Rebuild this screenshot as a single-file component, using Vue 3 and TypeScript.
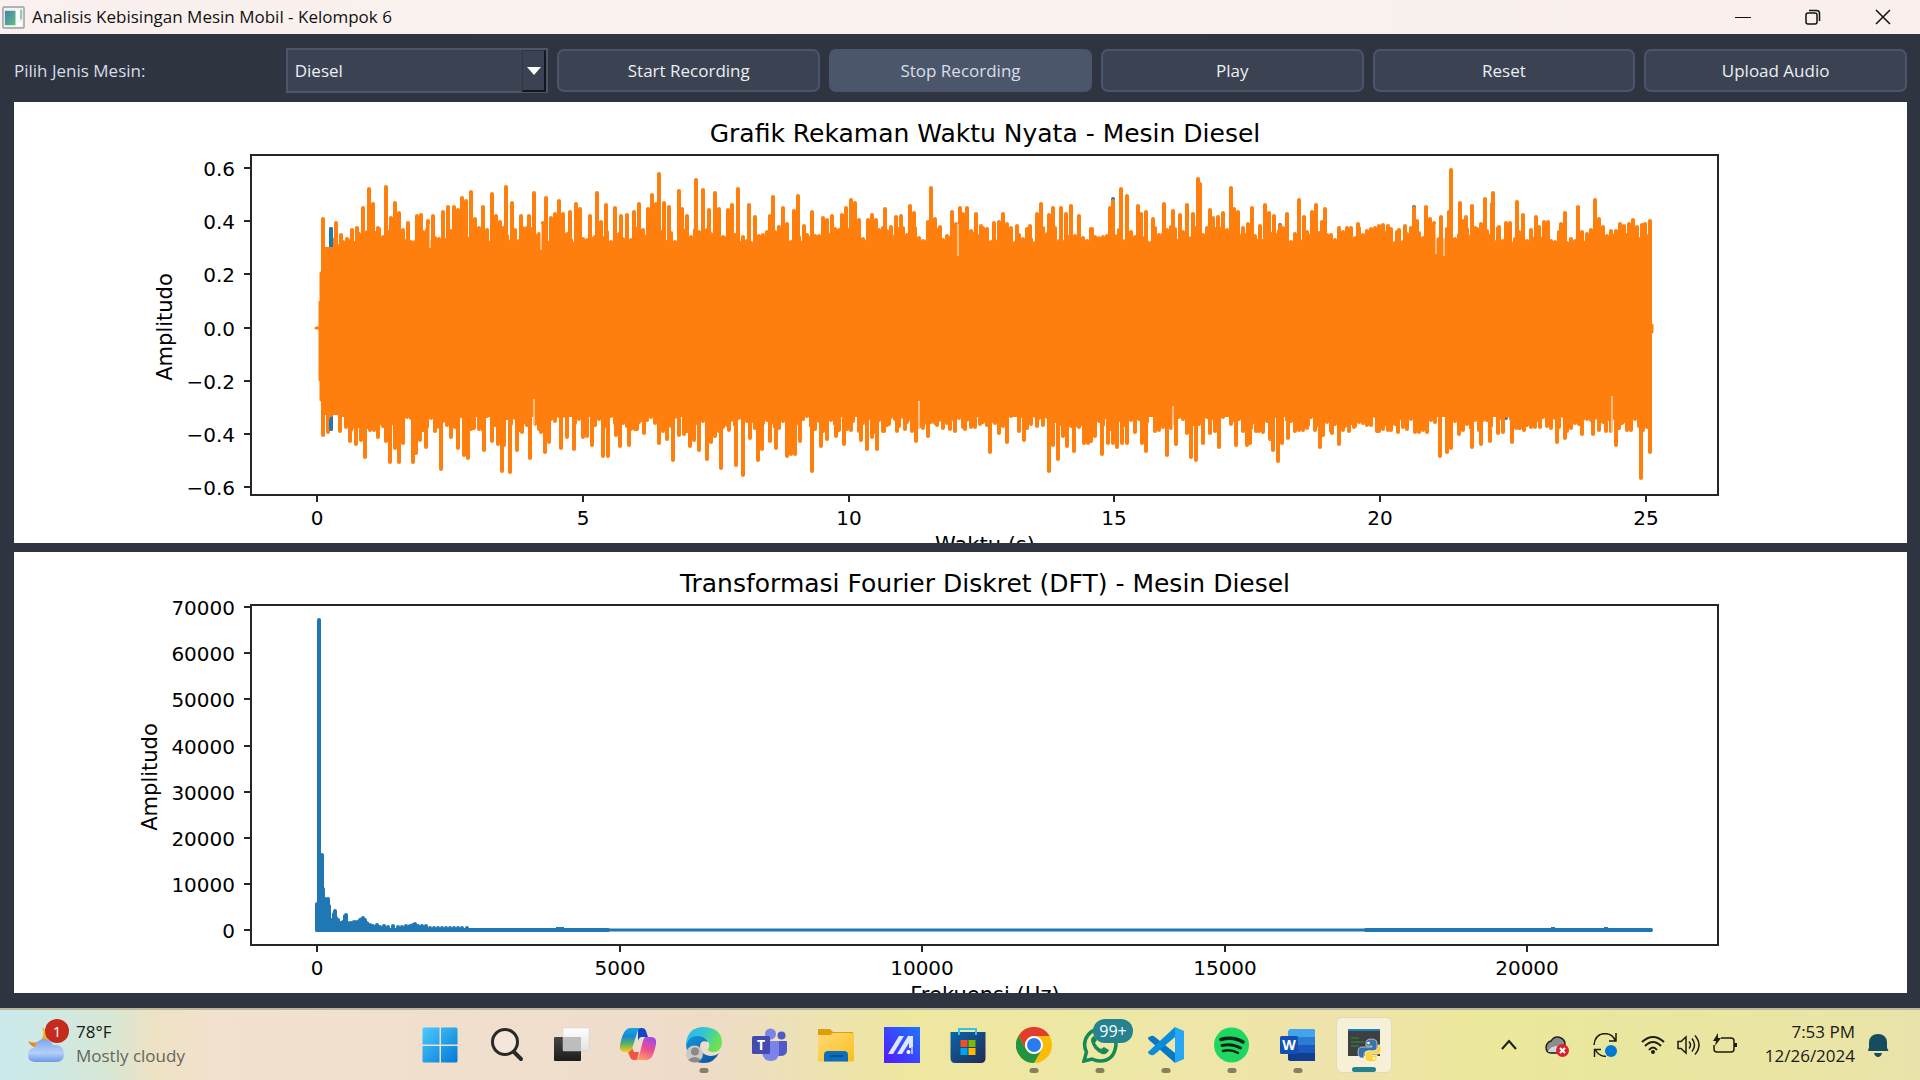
<script setup lang="ts">
import { ref } from 'vue'

type Point = [number, number]

const engines = ['Diesel', 'Bensin', 'Hybrid']
const engine = ref('Diesel')
const actions = ['Start Recording', 'Stop Recording', 'Play', 'Reset', 'Upload Audio']
const hovered = 'Stop Recording'

/* Peaks of the recorded signal, as x / y pairs on the chart canvas. */
const toPoints = (flat: string): Point[] =>
  flat.trim().split(/\s+/).map((pair) => pair.split(',').map(Number) as Point)

const upperPeaks = toPoints(`
323,219 336,223 341,235 352,230 357,228 363,208 369,189 373,204 378,228 386,187 391,218 395,203 399,213 408,223
417,216 421,215 428,221 433,216 443,212 448,207 454,207 458,210 462,198 466,201 471,192 475,219 483,207 492,194
496,216 500,222 506,187 512,203 521,216 529,216 534,193 543,223 546,198 551,218 555,214 559,201 563,214 570,212
576,204 580,209 590,216 597,193 601,222 606,205 615,208 621,216 627,215 634,212 639,204 648,209 652,195 656,204
659,174 664,203 669,207 679,191 682,209 687,216 696,180 703,190 709,210 715,193 719,209 728,210 732,205 738,189
749,205 755,217 770,216 773,197 783,208 787,224 794,211 798,196 804,226 812,212 823,218 827,220 832,216 842,215
846,208 851,200 855,203 859,220 868,220 872,215 876,220 885,209 896,217 901,216 910,206 914,213 928,222 931,188
935,219 940,227 952,212 956,224 960,208 963,214 967,208 976,214 981,226 994,223 999,222 1003,214 1007,224
1017,226 1030,226 1037,214 1041,204 1049,215 1053,208 1061,208 1066,214 1071,206 1079,216 1092,229 1110,208
1113,201 1121,189 1127,196 1138,206 1141,214 1146,212 1153,219 1164,204 1173,211 1180,215 1187,205 1193,214
1198,179 1200,184 1210,210 1213,218 1218,217 1223,213 1231,188 1234,209 1238,212 1248,224 1252,208 1260,226
1265,205 1269,213 1274,216 1280,226 1287,214 1299,200 1304,217 1312,212 1316,205 1322,222 1325,209 1339,228
1358,224 1367,231 1371,229 1375,228 1379,226 1383,225 1388,226 1397,232 1405,226 1414,208 1417,221 1426,207
1430,219 1434,223 1441,217 1449,212 1451,170 1460,203 1463,221 1466,217 1472,206 1477,229 1481,224 1485,199
1492,204 1493,193 1498,228 1506,223 1510,223 1517,202 1523,215 1531,230 1536,217 1544,222 1548,222 1561,224
1565,213 1578,207 1582,232 1591,230 1595,200 1599,219 1603,230 1611,231 1616,231 1620,224 1624,226 1629,224
1633,220 1637,227 1642,225 1645,224 1650,221`)

const lowerPeaks = toPoints(`
323,435 328,432 340,431 346,427 350,441 356,444 361,440 365,457 370,430 374,430 378,437 386,441 390,462 395,448
399,462 403,443 413,462 416,453 420,440 426,447 435,431 441,469 451,437 458,448 464,455 468,458 474,428 484,450
492,441 498,444 502,471 504,445 510,472 517,450 522,432 530,458 541,432 545,452 549,442 561,448 567,437 574,449
583,437 587,436 592,445 603,456 608,456 616,435 620,446 629,445 637,429 644,433 659,443 667,439 673,460 679,435
684,434 690,446 694,440 699,450 707,459 711,442 715,436 721,468 729,430 736,465 743,475 750,438 758,460 762,449
770,441 776,448 787,456 791,454 795,454 800,441 812,471 821,446 827,439 836,436 844,444 853,421 861,440 867,449
872,437 877,449 884,431 889,424 897,431 905,429 912,431 916,441 928,436 937,425 950,429 965,429 973,423 980,424
990,452 999,433 1007,442 1019,431 1024,440 1037,426 1049,471 1053,445 1058,459 1063,436 1067,446 1074,451
1084,443 1088,443 1091,441 1095,436 1102,454 1108,443 1113,443 1117,447 1122,443 1127,443 1135,432 1142,443
1146,451 1157,426 1167,455 1176,444 1187,433 1191,457 1196,460 1203,443 1210,433 1219,447 1236,445 1247,445
1250,443 1256,431 1270,439 1273,450 1278,461 1282,443 1288,438 1299,425 1308,425 1320,447 1323,435 1332,433
1339,444 1345,426 1349,431 1354,427 1369,421 1377,431 1388,430 1398,432 1405,415 1415,432 1427,432 1440,456
1447,452 1451,448 1459,434 1463,429 1472,447 1481,444 1490,441 1498,433 1512,442 1516,428 1520,428 1524,430
1531,427 1540,427 1548,416 1557,442 1565,438 1571,428 1577,420 1582,434 1593,434 1599,430 1606,431 1616,445
1622,423 1630,421 1641,478 1650,452`)

/* Small deterministic noise that fills the space between the peaks. */
const noise = (() => {
  let seed = 20241
  return () => {
    seed = (seed * 1103 + 12345) % 65536
    return seed / 65536
  }
})()

const spikes: string[] = []
for (const [x, y] of upperPeaks) spikes.push(`M${x} ${y}V320`)
for (const [x, y] of lowerPeaks) spikes.push(`M${x} ${y}V330`)
for (let x = 331; x < 1650; x += 4) {
  const calm = x < 345 ? 8 : 0
  spikes.push(`M${x} ${Math.round(227 + calm + noise() * 16)}V${Math.round(415 + noise() * 17 - calm)}`)
}
const waveform = spikes.join('')

const slits = toPoints('430,248 541,250 958,256 1436,254 1444,256')
const lowSlits = toPoints('534,399 919,401 1173,406 1612,396')

const spectrum = toPoints(`
317,904 319,620 322,855 323,889 325,899 328,899 329,906 331,920 334,914 335,911 336,918 338,920 341,923 343,922
345,916 346,915 348,923 351,923 354,922 357,922 360,920 362,919 363,918 365,920 367,923 370,925 373,926 377,925
380,927 384,926 388,927 393,926 398,927 402,927 406,926 410,926 413,925 415,924 418,926 422,926 426,926 430,928
434,928 438,928 442,928 446,928 450,928 454,928 458,928 462,928 467,928`).map(([x, y]) => `M${x} ${y}V930`).join('')

const charts = [
  {
    id: 'time',
    origin: 102,
    title: 'Grafik Rekaman Waktu Nyata - Mesin Diesel',
    xLabel: 'Waktu (s)',
    labelX: 172,
    xTicks: [[317, '0'], [583, '5'], [849, '10'], [1114, '15'], [1380, '20'], [1646, '25']] as [number, string][],
    yTicks: [[168, '0.6'], [221, '0.4'], [274, '0.2'], [328, '0.0'], [381, '−0.2'], [434, '−0.4'], [487, '−0.6']] as [number, string][],
  },
  {
    id: 'dft',
    origin: 552,
    title: 'Transformasi Fourier Diskret (DFT) - Mesin Diesel',
    xLabel: 'Frekuensi (Hz)',
    labelX: 157,
    xTicks: [[317, '0'], [620, '5000'], [922, '10000'], [1225, '15000'], [1527, '20000']] as [number, string][],
    yTicks: [[607, '70000'], [653, '60000'], [699, '50000'], [746, '40000'], [792, '30000'], [838, '20000'], [884, '10000'], [930, '0']] as [number, string][],
  },
]

interface TaskApp { id: string; name: string; state: '' | 'open' | 'active' }
const apps: TaskApp[] = [
  { id: 'start', name: 'Start', state: '' },
  { id: 'search', name: 'Search', state: '' },
  { id: 'tasks', name: 'Task View', state: '' },
  { id: 'copilot', name: 'Copilot', state: '' },
  { id: 'edge', name: 'Edge', state: 'open' },
  { id: 'teams', name: 'Teams', state: '' },
  { id: 'files', name: 'File Explorer', state: '' },
  { id: 'asus', name: 'MyASUS', state: '' },
  { id: 'store', name: 'Microsoft Store', state: '' },
  { id: 'chrome', name: 'Chrome', state: 'open' },
  { id: 'whatsapp', name: 'WhatsApp', state: 'open' },
  { id: 'code', name: 'Visual Studio Code', state: 'open' },
  { id: 'spotify', name: 'Spotify', state: 'open' },
  { id: 'word', name: 'Word', state: 'open' },
  { id: 'python', name: 'Python', state: 'active' },
]
</script>

<template>
  <div class="desktop">
    <header class="titlebar">
      <svg class="app-icon" viewBox="0 0 24 24" aria-hidden="true">
        <defs>
          <linearGradient id="appPane" x1="0" y1="0" x2="1" y2="1">
            <stop offset="0" stop-color="#4b7fb4" /><stop offset="1" stop-color="#5fbf7c" />
          </linearGradient>
        </defs>
        <rect x="1" y="1" width="22" height="22" rx="1" fill="#f1f2f2" stroke="#9a9fa3" stroke-width="1.5" />
        <rect x="3" y="5" width="11" height="15" fill="url(#appPane)" />
        <rect x="15" y="4" width="3" height="11" fill="#fff" /><rect x="19" y="4" width="2" height="10" fill="#8fc4a8" />
        <rect x="15" y="17" width="6" height="4" fill="#fff" />
      </svg>
      <h1 class="window-title">Analisis Kebisingan Mesin Mobil - Kelompok 6</h1>
      <div class="window-buttons">
        <button type="button" aria-label="Minimize"><svg viewBox="0 0 16 16"><path d="M0 8.500H16" /></svg></button>
        <button type="button" aria-label="Restore">
          <svg viewBox="0 0 16 16"><rect x="1" y="4" width="11" height="11" rx="2" stroke-width="1.500" /><path d="M4 1.500H11.500Q14.500 1.500 14.500 4.500V12" stroke-width="1.500" /></svg>
        </button>
        <button type="button" aria-label="Close"><svg viewBox="0 0 16 16"><path d="M1 1L15 15M15 1L1 15" stroke-width="1.500" /></svg></button>
      </div>
    </header>

    <main class="app">
      <div class="toolbar">
        <label for="engine">Pilih Jenis Mesin:</label>
        <div class="picker">
          <select id="engine" v-model="engine">
            <option v-for="name in engines" :key="name">{{ name }}</option>
          </select>
          <span class="picker-arrow" aria-hidden="true"><svg viewBox="0 0 14 8"><path d="M0 0H14L7 8Z" fill="#fff" /></svg></span>
        </div>
        <button v-for="action in actions" :key="action" type="button" :class="{ hovered: action === hovered }">{{ action }}</button>
      </div>

      <section v-for="chart in charts" :key="chart.id" class="panel">
        <svg class="chart" :viewBox="`14 ${chart.origin} 1893 441`" role="img" :aria-label="chart.title">
          <g v-if="chart.id === 'time'">
            <path d="M331 229V429M1113 199V220M1280 225V240M1506 400V418M1414 207V220" stroke="#1f77b4" class="trace" />
            <rect x="322" y="247" width="330" height="168" fill="#ff7f0e" />
            <rect x="340" y="245" width="1312" height="172" fill="#ff7f0e" />
            <path :d="waveform" stroke="#ff7f0e" class="trace" />
            <path d="M316 328H320M320 302V380M321 273V400M652 300V340M1652 325V332" stroke="#ff7f0e" class="trace thin" />
            <path d="M331 229V238M331 420V429" stroke="#1f77b4" class="trace" />
            <path v-for="[x, y] in slits" :key="`u${x}`" :d="`M${x} 224V${y}`" class="slit" />
            <path v-for="[x, y] in lowSlits" :key="`l${x}`" :d="`M${x} ${y}V434`" class="slit" />
          </g>
          <g v-else>
            <path d="M317 930H1652" stroke="#1f77b4" stroke-width="3" />
            <path d="M317 930H608M1366 930H1651" stroke="#1f77b4" class="trace" />
            <path :d="spectrum" stroke="#1f77b4" class="trace" />
            <path d="M1551 928H1555M1604 928H1608M556 928H564" stroke="#1f77b4" stroke-width="2" />
          </g>
          <rect x="251" :y="chart.origin + 53" width="1467" height="340" class="frame" />
          <text x="985" :y="chart.origin + 40" class="title">{{ chart.title }}</text>
          <g v-for="[x, label] in chart.xTicks" :key="label">
            <path :d="`M${x} ${chart.origin + 393}v7`" class="frame" />
            <text :x="x" :y="chart.origin + 423" class="tick">{{ label }}</text>
          </g>
          <g v-for="[y, label] in chart.yTicks" :key="label">
            <path :d="`M251 ${y}h-7`" class="frame" />
            <text x="235" :y="y + 8" class="tick end">{{ label }}</text>
          </g>
          <text :transform="`translate(${chart.labelX} ${chart.origin + 225}) rotate(-90)`" class="axis-name">Amplitudo</text>
          <text x="985" :y="chart.origin + 450" class="axis-name">{{ chart.xLabel }}</text>
        </svg>
      </section>
    </main>

    <footer class="taskbar">
      <button type="button" class="weather">
        <span class="weather-icon">
          <svg viewBox="0 0 36 36" aria-hidden="true">
            <defs>
              <linearGradient id="moon" x1="0" y1="1" x2="1" y2="0"><stop offset="0" stop-color="#e9791c" /><stop offset="1" stop-color="#f7c32e" /></linearGradient>
              <linearGradient id="cloud" x1="0" y1="0" x2="0" y2="1"><stop offset="0" stop-color="#7ea4ec" /><stop offset=".6" stop-color="#b4d0fa" /><stop offset="1" stop-color="#6f97e4" /></linearGradient>
            </defs>
            <path d="M14 0Q18 11 11 14Q6 17 0 14Q4 22 12 21Q20 19 20 10Q19 3 14 0Z" fill="url(#moon)" />
            <path d="M7 35Q0 35 0 28Q0 22 6 21Q9 12 17 12Q22 12 25 18Q36 17 36 27Q36 35 28 35Z" fill="url(#cloud)" />
          </svg>
          <span class="badge">1</span>
        </span>
        <span class="weather-text"><span>78°F</span><span class="muted">Mostly cloudy</span></span>
      </button>

      <nav class="apps" aria-label="Taskbar">
        <button v-for="app in apps" :key="app.id" type="button" :class="['app-button', app.state]" :aria-label="app.name">
          <svg v-if="app.id === 'start'" viewBox="0 0 36 36">
            <defs><linearGradient id="win" x1="0" y1="0" x2="1" y2="1"><stop offset="0" stop-color="#4ccbff" /><stop offset="1" stop-color="#0378d4" /></linearGradient></defs>
            <path d="M2 .500H17.500V17.500H.500V2Q.500 .500 2 .500ZM19 .500H34Q35.500 .500 35.500 2V17.500H19ZM.500 19H17.500V35.500H2Q.500 35.500 .500 34ZM19 19H35.500V34Q35.500 35.500 34 35.500H19Z" fill="url(#win)" />
          </svg>
          <svg v-else-if="app.id === 'search'" viewBox="0 0 36 36" fill="none" stroke="#292929">
            <circle cx="17" cy="15" r="12.500" fill="#f5e6da" stroke-width="3" /><path d="M26 25L33 32" stroke-width="4" stroke-linecap="round" />
          </svg>
          <svg v-else-if="app.id === 'tasks'" viewBox="0 0 36 36">
            <defs>
              <linearGradient id="tv" x1="0" y1="0" x2="0" y2="1"><stop stop-color="#454545" /><stop offset="1" stop-color="#1c1c1c" /></linearGradient>
              <linearGradient id="tvTop" x1="0" y1="0" x2="0" y2="1"><stop stop-color="#ffffff" /><stop offset="1" stop-color="#e2e2e2" /></linearGradient>
            </defs>
            <rect x="0" y="10" width="27" height="24" rx="1" fill="url(#tv)" /><rect x="9" y="1" width="26" height="23" rx="1" fill="url(#tvTop)" stroke="#d2ccc6" stroke-width=".5" /><rect x="9" y="10" width="18" height="14" fill="#bdbdbd" />
          </svg>
          <svg v-else-if="app.id === 'copilot'" viewBox="0 0 36 36">
            <defs>
              <linearGradient id="cpA" x1="0" y1="0" x2="0" y2="1"><stop offset="0" stop-color="#16a5e9" /><stop offset=".35" stop-color="#1787d2" /><stop offset=".65" stop-color="#56b163" /><stop offset="1" stop-color="#fecb19" /></linearGradient>
              <linearGradient id="cpB" x1=".6" y1="0" x2=".2" y2="1"><stop offset="0" stop-color="#a04be8" /><stop offset=".45" stop-color="#ec4b93" /><stop offset="1" stop-color="#ffa35e" /></linearGradient>
            </defs>
            <path d="M18 1H22Q25 1 26 4L28 10H22Q19 10 18 14Z" fill="#1546c5" />
            <path d="M10 1H21Q18 2 17 6L12 22Q11 25 8 25H5Q-1 25 0 18Q2 8 5 4Q7 1 10 1Z" fill="url(#cpA)" />
            <path d="M8 25Q11 25 12 21L14 25H19L17 33H14Q11 33 10 30Z" fill="#f2553d" />
            <path d="M26 10H31Q37 10 36 17Q34 27 31 31Q29 33 26 33H15Q18 33 19 29L23 14Q24 10 26 10Z" fill="url(#cpB)" />
          </svg>
          <svg v-else-if="app.id === 'edge'" viewBox="0 0 36 36">
            <defs>
              <linearGradient id="egA" x1="0" y1="0" x2="1" y2=".4"><stop offset="0" stop-color="#2bb6e6" /><stop offset=".5" stop-color="#30c6d4" /><stop offset="1" stop-color="#6ce34e" /></linearGradient>
              <linearGradient id="egB" x1="0" y1="0" x2="1" y2="1"><stop offset="0" stop-color="#1596df" /><stop offset="1" stop-color="#0b4d9b" /></linearGradient>
            </defs>
            <path d="M0 18Q1 0 18 0Q36 1 36 16Q35 25 27 25Q22 25 22 22Q24 20 23 16Q21 12 17 11Q8 8 0 18Z" fill="url(#egA)" />
            <path d="M0 18Q3 9 11 9Q19 9 22 15Q14 12 14 20Q15 28 24 29Q30 29 33 26Q28 36 18 36Q2 36 0 18Z" fill="url(#egB)" />
            <circle cx="8.500" cy="27" r="8.500" fill="#c9c9c7" /><circle cx="9" cy="24.500" r="4" fill="#8d8986" /><path d="M2 33Q9 27 15 33Q9 38 2 33Z" fill="#8d8986" />
          </svg>
          <svg v-else-if="app.id === 'teams'" viewBox="0 0 36 36">
            <circle cx="18.500" cy="7" r="5.500" fill="#7b83eb" /><circle cx="29.500" cy="8.500" r="4" fill="#5059c9" />
            <path d="M26 14H34Q35 14 35 15V23Q35 29 28 29Q26 29 25 28Z" fill="#5059c9" />
            <path d="M10 14H26Q27 14 27 15V25Q27 34 18.500 34Q11 34 10 25Z" fill="#7b83eb" />
            <rect x="0" y="9" width="18" height="18" rx="1.500" fill="#444bb0" />
            <text x="9" y="23" font-size="14" font-weight="700" fill="#fff" text-anchor="middle">T</text>
          </svg>
          <svg v-else-if="app.id === 'files'" viewBox="0 0 36 36">
            <defs><linearGradient id="fold" x1="0" y1="0" x2="1" y2="1"><stop stop-color="#ffd976" /><stop offset="1" stop-color="#fbbf1d" /></linearGradient></defs>
            <path d="M0 2H12L15 5H35V12H0Z" fill="#dc9e0b" /><path d="M0 8H12L15 6H36V33Q36 34.500 34.500 34.500H1.500Q0 34.500 0 33Z" fill="url(#fold)" />
            <path d="M6 34.500V28Q6 24 10 24H26Q30 24 30 28V34.500Z" fill="#0b6fc0" /><rect x="11" y="28" width="14" height="2" fill="#0a4e8e" />
          </svg>
          <svg v-else-if="app.id === 'asus'" viewBox="0 0 36 36">
            <defs><linearGradient id="asus" x1="0" y1="1" x2="1" y2="0"><stop stop-color="#5418ff" /><stop offset="1" stop-color="#1c76ff" /></linearGradient></defs>
            <rect width="36" height="36" fill="url(#asus)" /><path d="M4 27L15 9H20L9 27ZM13 27L24 9H29V21H25V16L18 27Z" fill="#dfe6ff" /><circle cx="24.500" cy="25" r="2" fill="#fff" /><path d="M27 20H29V27H27Z" fill="#aab7ff" />
          </svg>
          <svg v-else-if="app.id === 'store'" viewBox="0 0 36 36">
            <defs><linearGradient id="bag" x1="0" y1="0" x2="1" y2="1"><stop stop-color="#0a66ad" /><stop offset="1" stop-color="#222a52" /></linearGradient></defs>
            <path d="M9 8V2H26V8" fill="none" stroke="#35c1e8" stroke-width="2" /><path d="M.500 5H35.500V31Q35.500 36 31 36H5Q.500 36 .500 31Z" fill="url(#bag)" /><path d="M9 8V4.500M26 8V4.500" stroke="#35c1e8" stroke-width="2" />
            <path d="M10.500 13H17.500V20H10.500Z" fill="#f25022" /><path d="M18.500 13H25.500V20H18.500Z" fill="#7fba00" /><path d="M10.500 21H17.500V28H10.500Z" fill="#00a4ef" /><path d="M18.500 21H25.500V28H18.500Z" fill="#ffb900" />
          </svg>
          <svg v-else-if="app.id === 'chrome'" viewBox="0 0 36 36">
            <circle cx="18" cy="18" r="18" fill="#fbbc09" />
            <path d="M2.400 9A18 18 0 0 1 33.600 9H18A9 9 0 0 0 10.200 22.500Z" fill="#e33b2e" /><path d="M2.400 9L10.200 22.500A9 9 0 0 0 25.800 22.500L18 36A18 18 0 0 1 2.400 9Z" fill="#229342" />
            <circle cx="18" cy="18" r="9" fill="#fff" /><circle cx="18" cy="18" r="7" fill="#2a7bee" />
          </svg>
          <svg v-else-if="app.id === 'whatsapp'" viewBox="0 0 36 36">
            <path d="M2 34L4.500 25Q0 16 6 8Q12 1 20 2Q34 4 34 18Q32 34 18 34Q14 34 10 32Z" fill="none" stroke="#158a54" stroke-width="3.500" />
            <path d="M12 9Q9 10 9 14Q11 23 20 27Q25 28 27 23L22 20L19 22Q15 20 13 16L15 13Z" fill="#158a54" />
          </svg>
          <svg v-else-if="app.id === 'code'" viewBox="0 0 36 36">
            <path d="M27 0L36 4V32L27 36Z" fill="#28a5f4" /><path d="M27 36L1 13Q-1 11 1 10L3 9Q5 8 7 10L27 26Z" fill="#0878c5" /><path d="M27 0L1 24Q-1 25 1 27L3 28Q5 29 7 27L27 10Z" fill="#0b8ddb" />
          </svg>
          <svg v-else-if="app.id === 'spotify'" viewBox="0 0 36 36" fill="none" stroke="#10251a" stroke-linecap="round">
            <circle cx="17.500" cy="18" r="17.500" fill="#1ed760" stroke="none" /><path d="M7 12.500Q19 9 29 15" stroke-width="3.500" /><path d="M8 18.500Q18 16 26.500 21" stroke-width="3" /><path d="M9 24Q17 22 24 26" stroke-width="2.500" />
          </svg>
          <svg v-else-if="app.id === 'word'" viewBox="0 0 36 36">
            <path d="M10 2H34L35 3V10H8V4Z" fill="#41a5ee" /><path d="M8 10H35V18H8Z" fill="#2b7cd3" /><path d="M8 18H35V26H8Z" fill="#185abd" /><path d="M8 26H35V34H10L8 33Z" fill="#103f91" /><rect x="0" y="9" width="18" height="18" rx="1.500" fill="#1450b3" />
            <text x="9" y="23" font-size="14" font-weight="700" fill="#fff" text-anchor="middle">W</text>
          </svg>
          <svg v-else viewBox="0 0 36 36">
            <rect x="2" y="2" width="32" height="27" fill="#3e3f41" /><rect x="2" y="2" width="32" height="2" fill="#1682c9" /><path d="M5 11H13M5 15H18M5 19H13" stroke="#2c9135" stroke-width="1" />
            <path d="M25 12Q20 12 20 16V19H26V20H16Q12 20 12 25Q12 31 16 31H18V27Q18 24 22 24H28Q31 24 31 20V16Q31 12 25 12Z" fill="#3973a5" stroke="#dfe9ef" stroke-width=".7" />
            <path d="M26 35Q31 35 31 31V28H25V27H32Q35 27 35 24Q36 17 32 18V20Q32 24 28 24H22Q19 24 19 28V31Q19 35 26 35Z" fill="#ffd43b" stroke="#fff" stroke-width=".7" /><circle cx="22.500" cy="16" r="1.300" fill="#fff" /><circle cx="28" cy="31.500" r="1.300" fill="#fff" />
          </svg>
          <span v-if="app.id === 'whatsapp'" class="count">99+</span>
          <span v-if="app.state" class="running"></span>
        </button>
      </nav>

      <div class="tray">
        <button type="button" class="tray-button wide" aria-label="Show hidden icons"><svg viewBox="0 0 24 24" class="line"><path d="M5 16L12 8L19 16" stroke-width="2" /></svg></button>
        <button type="button" class="tray-button wide" aria-label="OneDrive">
          <svg viewBox="0 0 24 24"><path d="M6 20Q1 20 1 14Q2 9 6 8Q10 2 16 5Q20 7 20 11L14 20Z" fill="#8d8d8d" stroke="#222" stroke-width="1.500" /><path d="M3 19Q5 13 12 13L13 19Z" fill="#d7d7d7" /><circle cx="17.500" cy="17.500" r="6.500" fill="#d9232e" /><path d="M15 15L20 20M20 15L15 20" stroke="#fff" stroke-width="2" /></svg>
        </button>
        <button type="button" class="tray-button wide" aria-label="Updates">
          <svg viewBox="0 0 24 24" class="line"><path d="M1 12Q2 1 12 0.500Q20 1 22.500 8M23 0V8H16M13 23.500Q5 23 2 16M1.500 24V16.500H8" stroke-width="1.500" /><circle cx="18" cy="18" r="6" fill="#0078d4" stroke="none" /></svg>
        </button>
        <button type="button" class="tray-group" aria-label="Network, sound and battery">
          <svg viewBox="0 0 24 24" class="line"><path d="M1 9Q12 -1 23 9M4 13Q12 5 20 13M8 17Q12 12 16 17" stroke-width="2" /><circle cx="12" cy="19" r="2" fill="#1d1d12" stroke="none" /></svg>
          <svg viewBox="0 0 24 24" class="line"><path d="M1 8.500H4L9 4V20L4 15.500H1ZM12 8.500Q15 12 12 15.500M15 5.500Q20 12 15 18.500M18 2.500Q26 12 18 21.500" stroke-width="1.500" /></svg>
          <svg viewBox="0 0 24 24" class="line"><path d="M8 5H18Q21 5 21 8V16Q21 19 18 19H4Q1 19 1 16V12" stroke-width="1.500" /><path d="M21 10H24V14H21Z M5 0L0 8H3L2 13L8 5H5Z" fill="#1d1d12" stroke="none" /></svg>
        </button>
        <button type="button" class="clock"><span>7:53 PM</span><span>12/26/2024</span></button>
        <button type="button" class="tray-button" aria-label="Notifications">
          <svg viewBox="0 0 24 24"><path d="M3 18Q1 18 3 15V9Q4 1 12 1Q20 1 21 9V15Q23 18 22 18Z" fill="#154c5e" /><path d="M8 20H16Q15 24 12 24Q9 24 8 20Z" fill="#154c5e" /></svg>
        </button>
      </div>
    </footer>
  </div>
</template>

<style>
body {
  margin: 0;
}
</style>

<style scoped>
.desktop {
  display: flex;
  flex-direction: column;
  min-height: 100vh;
  font-family: "Open Sans", "Noto Sans", sans-serif;
  font-size: 17px;
  background: #2e3440;
}
button {
  font: inherit;
  padding: 0;
  border: 0;
  background: none;
  color: inherit;
}
.titlebar {
  display: flex;
  align-items: center;
  height: 34px;
  padding-left: 2px;
  background: linear-gradient(90deg, #f9f0ef, #faf2ee 40%, #f9f0ee);
  color: #111;
}
.app-icon {
  width: 23px;
  height: 23px;
  margin-right: 7px;
}
.window-title {
  flex: 1;
  margin: 0;
  font-size: 17px;
  font-weight: 400;
  line-height: 34px;
}
.window-buttons {
  display: flex;
  padding-right: 2px;
}
.window-buttons button {
  display: flex;
  align-items: center;
  justify-content: center;
  width: 70px;
  height: 34px;
}
.window-buttons svg {
  width: 16px;
  height: 16px;
  fill: none;
  stroke: #111;
  stroke-width: 1;
}
.app {
  display: flex;
  flex: 1;
  flex-direction: column;
  gap: 9px;
  padding: 14px 13px 15px 14px;
  background: #2e3440;
}
.toolbar {
  display: grid;
  grid-template-columns: repeat(7, minmax(0, 1fr));
  align-items: center;
  gap: 9px;
  height: 45px;
  color: #eceff4;
}
.toolbar label {
  color: #d8dee9;
}
.toolbar > button {
  height: 43px;
  border: 2px solid #4a546a;
  border-radius: 7px;
  background: #3b4252;
}
.toolbar > button.hovered {
  background: #4c566a;
  color: #d8dee9;
}
.picker {
  position: relative;
  height: 45px;
}
.picker select {
  box-sizing: border-box;
  width: 100%;
  height: 100%;
  padding: 0 30px 0 7px;
  border: 2px solid #4c566a;
  border-radius: 0;
  appearance: none;
  background: #3b4252;
  color: #eceff4;
  font: inherit;
}
.picker-arrow {
  position: absolute;
  top: 2px;
  right: 2px;
  bottom: 1px;
  display: flex;
  align-items: center;
  justify-content: center;
  width: 21px;
  border: 1px solid #2f3543;
  border-right: 2px solid #14171d;
  border-bottom: 2px solid #14171d;
  pointer-events: none;
}
.picker-arrow svg {
  width: 14px;
  height: 8px;
}
.panel {
  flex: 1;
  overflow: hidden;
  background: #fff;
}
.chart {
  display: block;
  width: 100%;
  height: 100%;
  font-family: "DejaVu Sans", sans-serif;
}
.trace {
  fill: none;
  stroke-width: 4;
  stroke-linecap: round;
}
.trace.thin {
  stroke-width: 3;
}
.slit {
  stroke: #fff;
  stroke-width: 1;
}
.frame {
  fill: none;
  stroke: #262626;
  stroke-width: 2;
}
.title {
  font-size: 25px;
  text-anchor: middle;
}
.axis-name {
  font-size: 21px;
  text-anchor: middle;
}
.tick {
  font-size: 20px;
  text-anchor: middle;
}
.tick.end {
  text-anchor: end;
}
.taskbar {
  display: flex;
  align-items: center;
  height: 70px;
  border-top: 2px solid #bab79b;
  background: linear-gradient(90deg, #cbeaec 0%, #cfe9e3 3%, #d9e6d2 6%, #eee2c4 8%, #f2e1ce 11%, #f0decd 30%, #eedcc8 37%, #ece2b4 42%, #eee7a0 47%, #eee8a6 58%, #efe3ac 70%, #ece89b 77%, #e9e79f 84%, #ebe5a3 92%, #e9e3ab 100%);
  color: #1a1a14;
}
.weather {
  display: flex;
  align-items: center;
  gap: 12px;
  width: 412px;
  padding-left: 28px;
  text-align: left;
}
.weather-icon {
  position: relative;
  width: 36px;
  height: 36px;
}
.weather-icon svg {
  width: 36px;
  height: 36px;
}
.badge {
  position: absolute;
  top: -8px;
  right: -5px;
  width: 24px;
  border-radius: 50%;
  background: #c42b1c;
  color: #fff;
  font-size: 15px;
  line-height: 24px;
  text-align: center;
}
.weather-text,
.clock {
  display: flex;
  flex-direction: column;
  padding-bottom: 2px;
  line-height: 24px;
}
.muted {
  color: #66665b;
}
.apps {
  display: flex;
  gap: 10px;
}
.app-button {
  position: relative;
  display: flex;
  align-items: center;
  justify-content: center;
  box-sizing: border-box;
  width: 56px;
  height: 56px;
  border-radius: 6px;
}
.app-button svg {
  width: 36px;
  height: 36px;
}
.app-button.active {
  border: 1px solid #e0dcb4;
  background: #f6f1d6;
}
.running {
  position: absolute;
  bottom: 0;
  left: 50%;
  width: 9px;
  height: 5px;
  border-radius: 3px;
  background: #868063;
  transform: translateX(-50%);
}
.active .running {
  width: 24px;
  background: #25828f;
}
.count {
  position: absolute;
  top: 2px;
  left: 21px;
  width: 40px;
  border-radius: 12px;
  background: #25828f;
  color: #fff;
  font-size: 16px;
  line-height: 24px;
}
.tray {
  display: flex;
  align-items: center;
  margin-left: auto;
  padding-right: 30px;
}
.tray svg {
  display: block;
  width: 24px;
  height: 24px;
}
.tray .line {
  fill: none;
  stroke: #1d1d12;
}
.tray-button.wide {
  display: flex;
  justify-content: center;
  width: 48px;
}
.tray-group {
  display: flex;
  gap: 12px;
  padding: 0 12px;
}
.clock {
  width: 106px;
  margin-right: 11px;
  text-align: right;
}
</style>
